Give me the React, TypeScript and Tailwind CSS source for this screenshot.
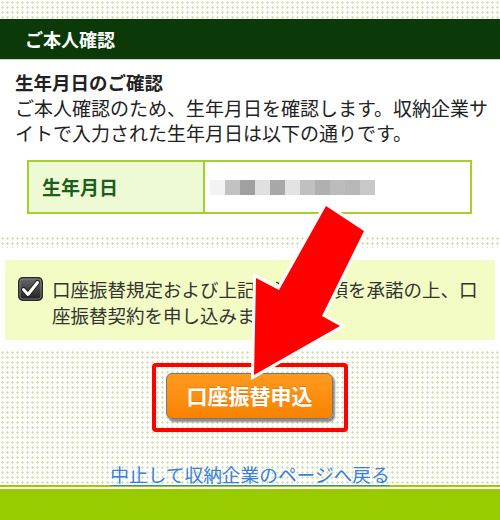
import React from "react";

const dots =
  "bg-[radial-gradient(circle,#d9e2b4_1.1px,transparent_1.4px)] bg-[length:5px_5px]";

function CheckIcon() {
  return (
    <svg width="25" height="24" viewBox="0 0 25 24" className="shrink-0">
      <defs>
        <linearGradient id="cbg" x1="0" y1="0" x2="0" y2="1">
          <stop offset="0" stopColor="#6a6a6a" />
          <stop offset="1" stopColor="#1e1e1e" />
        </linearGradient>
      </defs>
      <rect x="0.75" y="0.75" width="23.5" height="22.5" rx="4" fill="url(#cbg)" stroke="#2a2a2a" strokeWidth="1.5" />
      <rect x="2" y="2" width="21" height="20" rx="3" fill="none" stroke="#8a8a8a" strokeWidth="0.8" />
      <path d="M5.5 12.5 L10 17.5 L19.5 5.5" fill="none" stroke="#222" strokeWidth="5" strokeLinecap="round" strokeLinejoin="round" />
      <path d="M5.5 12.5 L10 17.5 L19.5 5.5" fill="none" stroke="#fff" strokeWidth="3" strokeLinecap="round" strokeLinejoin="round" />
    </svg>
  );
}

// pixelated (blurred) birth date
const blur = [
  "bg-[#f3f3f3]",
  "bg-[#c2c2c2]",
  "bg-[#a0a0a0]",
  "bg-[#e0e0e0]",
  "bg-[#a8a8a8]",
  "bg-[#e3e3e3]",
  "bg-[#c0c0c0]",
  "bg-[#b0b0b0]",
  "bg-[#bcbcbc]",
  "bg-[#b8b8b8]",
  "bg-[#c8c8c8]",
];

export default function App() {
  return (
    <div className="relative h-[520px] w-[500px] overflow-hidden bg-white font-['Noto_Sans_CJK_JP',sans-serif] text-[#222]">
      <div className={`h-[19px] ${dots}`} />

      {/* section title */}
      <div className="flex h-[41px] items-center border-b border-[#c8d4c4] bg-[#0b3a08] pl-[25px] text-[18px] font-bold leading-none text-white">
        ご本人確認
      </div>

      {/* birth date */}
      <div className="pl-[15px] pr-[8px] pt-[10px] pb-[22px]">
        <h2 className="text-[18.5px] font-bold leading-[25px]">生年月日のご確認</h2>
        <p className="text-[19px] leading-[25px]">
          ご本人確認のため、生年月日を確認します。収納企業サイトで入力された生年月日は以下の通りです。
        </p>
        <div className="ml-[12px] mr-[20px] mt-[15px] flex h-[54px] border-2 border-[#a3d12a]">
          <div className="flex w-[176px] items-center border-r-2 border-[#a3d12a] bg-[#eefad4] pl-[13px] text-[19px] font-bold text-[#1c5e1c]">
            生年月日
          </div>
          <div className="flex flex-1 items-center pl-[5px]">
            <div className="flex h-[15px]">
              {blur.map((c, i) => (
                <div key={i} className={`w-[15px] ${c}`} />
              ))}
            </div>
          </div>
        </div>
      </div>

      <div className={`h-[12px] ${dots}`} />

      {/* agreement */}
      <div className="px-[5px] pt-[12px] pb-[10px]">
        <div className="flex gap-[9px] bg-[#f2fcc4] pl-[13px] pr-[13px] pt-[16px] pb-[12px]">
          <div className="pt-[1px]">
            <CheckIcon />
          </div>
          <p className="text-[18.5px] leading-[26px] text-[#333]">
            口座振替規定および上記の注意事項を承諾の上、口座振替契約を申し込みます。
          </p>
        </div>
      </div>

      {/* submit */}
      <div className={`flex h-[135px] flex-col items-center pt-[13px] ${dots}`}>
        <div className="rounded-[4px] border-4 border-[#f00] pb-[9px] pl-[10px] pr-[11px] pt-[6px]">
          <button className="flex h-[46px] w-[167px] items-center justify-center rounded-[6px] border border-[#777] bg-gradient-to-b from-[#ff9a1e] to-[#f88300] text-[21px] font-bold text-white shadow-[2px_3px_2px_rgba(0,0,0,0.45)] [text-shadow:0_-1px_0_rgba(0,0,0,0.15)]">
            口座振替申込
          </button>
        </div>
        <a href="#" className="mt-[29px] text-[18.7px] leading-[25px] text-[#3a7fdc] underline underline-offset-[3px]">
          中止して収納企業のページへ戻る
        </a>
      </div>

      <div className="h-[2px] bg-[#99cc00]" />
      <div className="h-[2px] bg-white" />
      <div className="h-[40px] bg-[#99cc00]" />

      {/* annotation arrow */}
      <svg className="pointer-events-none absolute left-0 top-0" width="500" height="520" viewBox="0 0 500 520">
        <polygon
          points="326,206 364,231 322,316 340,326 254,375 256,278 279,290"
          fill="#ff0000"
          stroke="#fff"
          strokeWidth="6"
          strokeLinejoin="miter"
          paintOrder="stroke"
        />
      </svg>
    </div>
  );
}
